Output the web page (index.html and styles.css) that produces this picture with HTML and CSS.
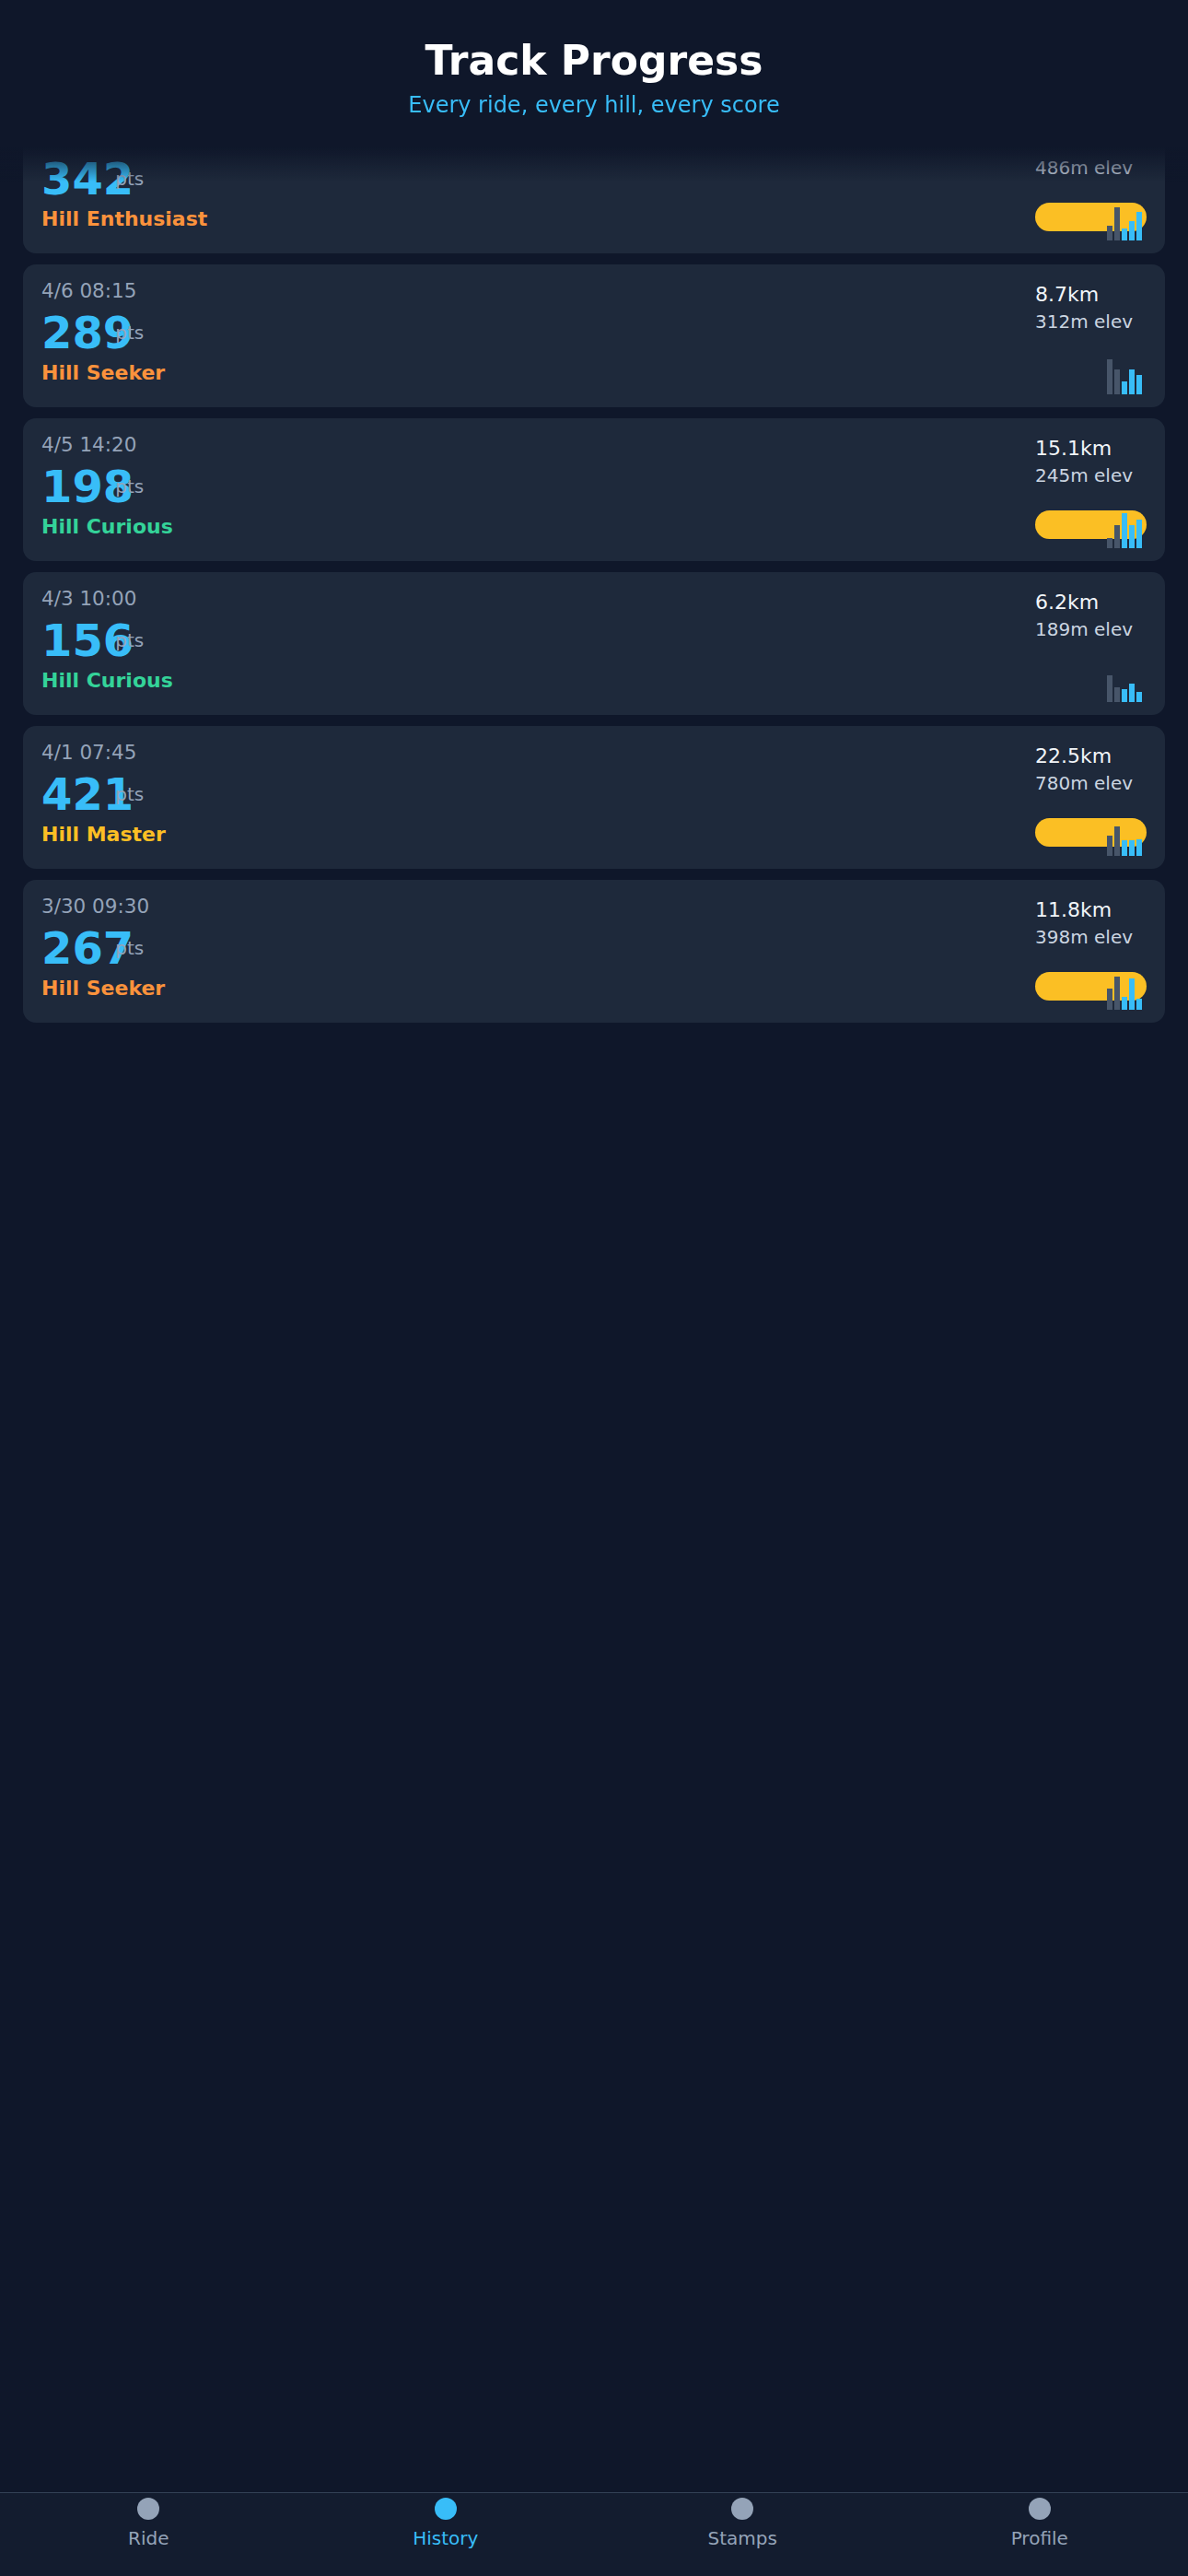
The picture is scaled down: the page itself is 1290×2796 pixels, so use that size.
FILE: index.html
```html
<!DOCTYPE html>
<html lang="en">
<head>
    <meta charset="UTF-8">
    <meta name="viewport" content="width=device-width, initial-scale=1.0">
    <title>Track Progress</title>
    <link rel="stylesheet" href="styles.css">
</head>
<body>

<div class="app">
    <header class="top">
        <h1 class="title">Track Progress</h1>
        <p class="subtitle">Every ride, every hill, every score</p>
    </header>

    <main class="rides">
        <div class="ride">
            <div class="ride-main">
                <div class="ride-date">4/8 17:40</div>
                <div class="ride-score"><span class="score">342</span><span class="pts">pts</span></div>
                <div class="level level-orange">Hill Enthusiast</div>
            </div>
            <div class="ride-side">
                <div class="km">16.3km</div>
                <div class="elev">486m elev</div>
                <div class="viz">
                    <span class="badge"></span>
                    <div class="bars">
                        <span class="bar past" style="height:16px"></span>
                        <span class="bar past" style="height:36px"></span>
                        <span class="bar now" style="height:13px"></span>
                        <span class="bar now" style="height:21px"></span>
                        <span class="bar now" style="height:31px"></span>
                    </div>
                </div>
            </div>
        </div>

        <div class="ride">
            <div class="ride-main">
                <div class="ride-date">4/6 08:15</div>
                <div class="ride-score"><span class="score">289</span><span class="pts">pts</span></div>
                <div class="level level-orange">Hill Seeker</div>
            </div>
            <div class="ride-side">
                <div class="km">8.7km</div>
                <div class="elev">312m elev</div>
                <div class="viz">
                    <div class="bars">
                        <span class="bar past" style="height:38px"></span>
                        <span class="bar past" style="height:27px"></span>
                        <span class="bar now" style="height:14px"></span>
                        <span class="bar now" style="height:27px"></span>
                        <span class="bar now" style="height:21px"></span>
                    </div>
                </div>
            </div>
        </div>

        <div class="ride">
            <div class="ride-main">
                <div class="ride-date">4/5 14:20</div>
                <div class="ride-score"><span class="score">198</span><span class="pts">pts</span></div>
                <div class="level level-green">Hill Curious</div>
            </div>
            <div class="ride-side">
                <div class="km">15.1km</div>
                <div class="elev">245m elev</div>
                <div class="viz">
                    <span class="badge"></span>
                    <div class="bars">
                        <span class="bar past" style="height:11px"></span>
                        <span class="bar past" style="height:25px"></span>
                        <span class="bar now" style="height:38px"></span>
                        <span class="bar now" style="height:25px"></span>
                        <span class="bar now" style="height:31px"></span>
                    </div>
                </div>
            </div>
        </div>

        <div class="ride">
            <div class="ride-main">
                <div class="ride-date">4/3 10:00</div>
                <div class="ride-score"><span class="score">156</span><span class="pts">pts</span></div>
                <div class="level level-green">Hill Curious</div>
            </div>
            <div class="ride-side">
                <div class="km">6.2km</div>
                <div class="elev">189m elev</div>
                <div class="viz">
                    <div class="bars">
                        <span class="bar past" style="height:29px"></span>
                        <span class="bar past" style="height:16px"></span>
                        <span class="bar now" style="height:14px"></span>
                        <span class="bar now" style="height:20px"></span>
                        <span class="bar now" style="height:11px"></span>
                    </div>
                </div>
            </div>
        </div>

        <div class="ride">
            <div class="ride-main">
                <div class="ride-date">4/1 07:45</div>
                <div class="ride-score"><span class="score">421</span><span class="pts">pts</span></div>
                <div class="level level-gold">Hill Master</div>
            </div>
            <div class="ride-side">
                <div class="km">22.5km</div>
                <div class="elev">780m elev</div>
                <div class="viz">
                    <span class="badge"></span>
                    <div class="bars">
                        <span class="bar past" style="height:22px"></span>
                        <span class="bar past" style="height:32px"></span>
                        <span class="bar now" style="height:17px"></span>
                        <span class="bar now" style="height:17px"></span>
                        <span class="bar now" style="height:18px"></span>
                    </div>
                </div>
            </div>
        </div>

        <div class="ride">
            <div class="ride-main">
                <div class="ride-date">3/30 09:30</div>
                <div class="ride-score"><span class="score">267</span><span class="pts">pts</span></div>
                <div class="level level-orange">Hill Seeker</div>
            </div>
            <div class="ride-side">
                <div class="km">11.8km</div>
                <div class="elev">398m elev</div>
                <div class="viz">
                    <span class="badge"></span>
                    <div class="bars">
                        <span class="bar past" style="height:23px"></span>
                        <span class="bar past" style="height:36px"></span>
                        <span class="bar now" style="height:14px"></span>
                        <span class="bar now" style="height:34px"></span>
                        <span class="bar now" style="height:12px"></span>
                    </div>
                </div>
            </div>
        </div>
    </main>

    <nav class="tabbar">
        <div class="tab">
            <span class="dot"></span>
            <span class="tab-label">Ride</span>
        </div>
        <div class="tab active">
            <span class="dot"></span>
            <span class="tab-label">History</span>
        </div>
        <div class="tab">
            <span class="dot"></span>
            <span class="tab-label">Stamps</span>
        </div>
        <div class="tab">
            <span class="dot"></span>
            <span class="tab-label">Profile</span>
        </div>
    </nav>
</div>

</body>
</html>
```

FILE: styles.css
```css
body {
    margin: 0;
    background-color: #0f172a;
    font-family: "DejaVu Sans", "Noto Sans", sans-serif;
    color: #f1f5f9;
}
.app {
    min-height: 100vh;
    display: flex;
    flex-direction: column;
}

/* header sits over the list and fades out */
.top {
    position: fixed;
    top: 0;
    left: 0;
    right: 0;
    z-index: 10;
    padding: 40px 0 69px;
    text-align: center;
    background: linear-gradient(to bottom, #0f172a 81%, rgba(15, 23, 42, 0));
}
.title {
    margin: 0;
    font-size: 44px;
    font-weight: bold;
    color: #ffffff;
}
.subtitle {
    margin: 9px 0 0;
    font-size: 24px;
    color: #38bdf8;
}

.rides {
    flex: 1;
    display: flex;
    flex-direction: column;
    gap: 12px;
    padding: 120px 25px 0;
}
.ride {
    display: flex;
    justify-content: space-between;
    padding: 16px 20px 14px;
    background-color: #1e293b;
    border-radius: 14px;
}
.ride-date {
    font-size: 21.5px;
    color: #94a3b8;
}
.ride-score {
    display: flex;
    align-items: center;
    margin-top: 5px;
}
.score {
    font-size: 48px;
    font-weight: bold;
    color: #38bdf8;
}
.pts {
    margin-left: -20px;
    font-size: 20px;
    color: #94a3b8;
}
.level {
    margin-top: 3px;
    font-size: 22px;
    font-weight: bold;
}
.level-orange {
    color: #fb923c;
}
.level-green {
    color: #34d399;
}
.level-gold {
    color: #fbbf24;
}

.ride-side {
    width: 121px;
    padding-top: 4px;
}
.km {
    font-size: 22px;
    color: #f1f5f9;
}
.elev {
    margin-top: 5px;
    font-size: 20px;
    color: #cbd5e1;
}
.viz {
    display: grid;
    height: 41px;
    margin-top: 26px;
}
.badge {
    grid-area: 1 / 1;
    align-self: start;
    height: 31px;
    border-radius: 16px;
    background-color: #fbbf24;
}
.bars {
    grid-area: 1 / 1;
    align-self: end;
    justify-self: end;
    display: flex;
    align-items: flex-end;
    gap: 2px;
    margin-right: 5px;
}
.bar {
    width: 6px;
}
.bar.past {
    background-color: #475569;
}
.bar.now {
    background-color: #38bdf8;
}

.tabbar {
    display: grid;
    grid-template-columns: repeat(4, 1fr);
    padding: 5px 0 29px;
    border-top: 1px solid #334155;
    background-color: #131c2f;
}
.tab {
    display: flex;
    flex-direction: column;
    align-items: center;
    gap: 8px;
    color: #94a3b8;
}
.dot {
    width: 24px;
    height: 24px;
    border-radius: 50%;
    background-color: #94a3b8;
}
.tab-label {
    font-size: 20px;
}
.tab.active {
    color: #38bdf8;
}
.tab.active .dot {
    background-color: #38bdf8;
}
```
